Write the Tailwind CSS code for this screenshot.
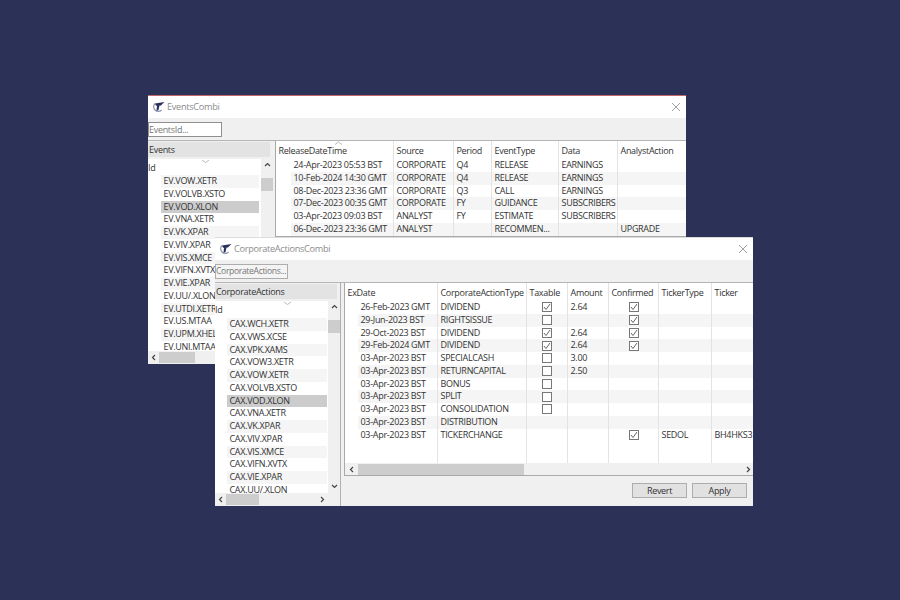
<!DOCTYPE html>
<html>
<head>
    <meta charset="UTF-8">
    <title>Combi windows</title>
    <script src="https://cdn.jsdelivr.net/npm/@tailwindcss/browser@4"></script>
</head>
<body class="bg-[#2b3157] w-[900px] h-[600px] overflow-hidden relative font-['Open_Sans',sans-serif] text-[9px] tracking-[-0.3px] text-[#333]">

    <!-- EventsCombi window -->
    <div class="absolute left-[148px] top-[95px] w-[538px] h-[269px] bg-[#f0f0f0] border-t border-[#c0686c] flex flex-col overflow-hidden">
        <div class="h-[22px] bg-white flex items-center pl-[4px] shrink-0">
            <svg width="13" height="12" viewBox="0 0 13 12"><path d="M3 2.5 A4.5 4.5 0 1 0 9.5 9" fill="none" stroke="#8e97ad" stroke-width="1.2"/><path d="M3 2.5 L12.5 1 Q10 3 9 4.5 L7.5 4.5 L6.5 9 L4.5 10 L5 5 Q3.5 4.5 3 2.5Z" fill="#27315c"/></svg>
            <span class="ml-[2px] text-[#8c8c8c] text-[9.2px]">EventsCombi</span>
            <svg class="ml-auto mr-[5px]" width="10" height="10" viewBox="0 0 10 10"><path d="M1 1 L9 9 M9 1 L1 9" stroke="#8a8a8a" stroke-width="0.8"/></svg>
        </div>
        <div class="h-[22px] shrink-0 flex items-center">
            <div class="w-[74px] h-[15px] bg-white border border-[#8f8f8f] text-[#777] leading-[13px] overflow-hidden">EventsId...</div>
        </div>
        <div class="flex flex-1 min-h-0 border-t border-[#b5b5b5]">
            <div id="eventsList" class="w-[125px] shrink-0 flex flex-col"></div>
            <div class="w-[2px] shrink-0"></div>
            <div id="eventsTable" class="flex-1 h-[96px] border-l border-b border-[#a9a9a9] bg-white relative overflow-hidden"></div>
        </div>
    </div>

    <!-- CorporateActionsCombi window -->
    <div class="absolute left-[215px] top-[237px] w-[538px] h-[269px] bg-[#f0f0f0] border-t border-[#dcdcdc] flex flex-col overflow-hidden">
        <div class="h-[22px] bg-white flex items-center pl-[4px] shrink-0">
            <svg width="13" height="12" viewBox="0 0 13 12"><path d="M3 2.5 A4.5 4.5 0 1 0 9.5 9" fill="none" stroke="#8e97ad" stroke-width="1.2"/><path d="M3 2.5 L12.5 1 Q10 3 9 4.5 L7.5 4.5 L6.5 9 L4.5 10 L5 5 Q3.5 4.5 3 2.5Z" fill="#27315c"/></svg>
            <span class="ml-[2px] text-[#8c8c8c] text-[9.2px]">CorporateActionsCombi</span>
            <svg class="ml-auto mr-[5px]" width="10" height="10" viewBox="0 0 10 10"><path d="M1 1 L9 9 M9 1 L1 9" stroke="#8a8a8a" stroke-width="0.8"/></svg>
        </div>
        <div class="h-[22px] shrink-0 flex items-center">
            <div class="w-[73px] h-[15px] bg-[#f4f4f4] border border-[#adadad] text-[#777] text-[8.6px] tracking-[-0.35px] leading-[13px] overflow-hidden whitespace-nowrap">CorporateActions...</div>
        </div>
        <div class="flex flex-1 min-h-0 border-t border-[#b5b5b5]">
            <div id="caList" class="w-[126px] shrink-0 flex flex-col border-r border-[#b0b0b0]"></div>
            <div class="flex-1 flex flex-col pl-[3px] min-w-0">
                <div id="caTable" class="h-[193px] border border-t-0 border-r-0 border-[#a9a9a9] bg-white flex flex-col overflow-hidden"></div>
                <div class="flex-1 flex items-center justify-end gap-[5px] pr-[6px] pb-[1px]">
                    <div class="w-[55px] h-[15px] bg-[#e1e1e1] border border-[#adadad] text-center leading-[13px]">Revert</div>
                    <div class="w-[55px] h-[15px] bg-[#e1e1e1] border border-[#adadad] text-center leading-[13px]">Apply</div>
                </div>
            </div>
        </div>
    </div>

    <script>
        const box = '<span class="w-[10px] h-[10px] border border-[#777] bg-white flex items-center justify-center"></span>';
        const tick = '<span class="w-[10px] h-[10px] border border-[#777] bg-white flex items-center justify-center"><svg width="8" height="8" viewBox="0 0 8 8"><path d="M1 4 L3 6.5 L7 1" fill="none" stroke="#555" stroke-width="0.9"/></svg></span>';
        const up = '<svg width="7" height="5" viewBox="0 0 7 5"><path d="M1 4 L3.5 1.5 L6 4" fill="none" stroke="#444" stroke-width="1.2"/></svg>';
        const down = '<svg width="7" height="5" viewBox="0 0 7 5"><path d="M1 1 L3.5 3.5 L6 1" fill="none" stroke="#444" stroke-width="1.2"/></svg>';
        const left = '<svg width="5" height="7" viewBox="0 0 5 7"><path d="M4 1 L1.5 3.5 L4 6" fill="none" stroke="#444" stroke-width="1.2"/></svg>';
        const right = '<svg width="5" height="7" viewBox="0 0 5 7"><path d="M1 1 L3.5 3.5 L1 6" fill="none" stroke="#444" stroke-width="1.2"/></svg>';
        const caret = '<svg class="absolute top-0" style="left:CARETpx" width="9" height="4" viewBox="0 0 9 4"><path d="M1 1 L4.5 3.5 L8 1" fill="none" stroke="#a8a8a8" stroke-width="0.8"/></svg>';

        function listPane(title, names, selected, rowLeft, rowWidth, thumbW, caretX, gap) {
            const rows = names.map((n, i) => {
                const bg = n === selected ? 'bg-[#cccccc]' : (i % 2 ? 'bg-white' : 'bg-[#f5f5f5]');
                return `<div class="h-[12.75px] leading-[12.75px] pl-[2.5px] whitespace-nowrap overflow-hidden ${bg}">${n}</div>`;
            }).join('');
            return `
                <div class="h-[15px] mr-[3px] mt-[1px] bg-[#e3e3e3] leading-[15px] pl-[1px] shrink-0 font-medium text-[#333]">${title}</div>
                <div class="h-[2px] shrink-0"></div>
                <div class="flex-1 min-h-0 flex bg-white relative">
                    ${caret.replace('CARET', caretX)}
                    <div class="flex-1 min-w-0 overflow-hidden">
                        <div class="h-[16px] leading-[18px] shrink-0">Id</div>
                        <div style="margin-top:${gap}px;margin-left:${rowLeft}px;width:${rowWidth}px" class="overflow-hidden">${rows}</div>
                    </div>
                    <div class="w-[12px] shrink-0 bg-[#f0f0f0] flex flex-col items-center">
                        <div class="h-[19px] pt-[3px]">${up}</div>
                        <div class="h-[13px] w-full bg-[#cdcdcd]"></div>
                        <div class="mt-auto h-[13px] flex items-center">${down}</div>
                    </div>
                </div>
                <div class="h-[13px] shrink-0 bg-[#f0f0f0] flex items-center pl-[3px]">
                    ${left}
                    <div class="ml-[3px] h-[11px] bg-[#cdcdcd]" style="width:${thumbW}px"></div>
                    <div class="ml-auto mr-[15px]">${right}</div>
                </div>`;
        }

        function gridRows(cols, rows, indent) {
            return rows.map((r, i) => {
                const cells = r.map((c, j) => `<div style="width:${j ? cols[j] : cols[j] - indent}px" class="shrink-0 h-full pl-[2.5px] leading-[12.75px] whitespace-nowrap overflow-hidden">${c}</div>`).join('');
                return `<div style="margin-left:${indent}px" class="h-[12.75px] flex ${i % 2 ? 'bg-[#f5f5f5]' : 'bg-white'}">${cells}</div>`;
            }).join('');
        }

        function header(cols, names) {
            return `<div class="h-[18px] shrink-0 flex text-[#333]">${names.map((n, i) => `<div style="width:${cols[i]}px" class="shrink-0 pl-[2.5px] leading-[19px] whitespace-nowrap overflow-hidden">${n}</div>`).join('')}</div>`;
        }

        function lines(cols, height) {
            let x = 0;
            return cols.slice(0, -1).map(w => { x += w; return `<div class="absolute top-0 w-px bg-[#e3e3e3]" style="left:${x - 1}px;height:${height}px"></div>`; }).join('');
        }

        document.getElementById('eventsList').innerHTML = listPane('Events',
            ['EV.VOW.XETR','EV.VOLVB.XSTO','EV.VOD.XLON','EV.VNA.XETR','EV.VK.XPAR','EV.VIV.XPAR','EV.VIS.XMCE','EV.VIFN.XVTX','EV.VIE.XPAR','EV.UU/.XLON','EV.UTDI.XETR','EV.US.MTAA','EV.UPM.XHEL','EV.UNI.MTAA'],
            'EV.VOD.XLON', 13, 98, 36, 53, 0);

        document.getElementById('caList').innerHTML = listPane('CorporateActions',
            ['CAX.WCH.XETR','CAX.VWS.XCSE','CAX.VPK.XAMS','CAX.VOW3.XETR','CAX.VOW.XETR','CAX.VOLVB.XSTO','CAX.VOD.XLON','CAX.VNA.XETR','CAX.VK.XPAR','CAX.VIV.XPAR','CAX.VIS.XMCE','CAX.VIFN.XVTX','CAX.VIE.XPAR','CAX.UU/.XLON'],
            'CAX.VOD.XLON', 12, 100, 33, 68, 1);

        const evCols = [118, 60, 38, 67, 59, 68];
        const evRows = [
            ['24-Apr-2023 05:53 BST','CORPORATE','Q4','RELEASE','EARNINGS',''],
            ['10-Feb-2024 14:30 GMT','CORPORATE','Q4','RELEASE','EARNINGS',''],
            ['08-Dec-2023 23:36 GMT','CORPORATE','Q3','CALL','EARNINGS',''],
            ['07-Dec-2023 00:35 GMT','CORPORATE','FY','GUIDANCE','SUBSCRIBERS',''],
            ['03-Apr-2023 09:03 BST','ANALYST','FY','ESTIMATE','SUBSCRIBERS',''],
            ['06-Dec-2023 23:36 GMT','ANALYST','','RECOMMEN...','','UPGRADE']
        ];
        document.getElementById('eventsTable').innerHTML =
            header(evCols, ['ReleaseDateTime','Source','Period','EventType','Data','AnalystAction']) +
            gridRows(evCols, evRows, 15) + lines(evCols, 96) +
            '<svg class="absolute left-[58px] top-0" width="9" height="4" viewBox="0 0 9 4"><path d="M1 3.5 L4.5 1 L8 3.5" fill="none" stroke="#a8a8a8" stroke-width="0.8"/></svg>';

        const caCols = [93, 89, 41, 41, 50, 53, 41];
        const cb = c => `<div class="h-full flex items-center justify-center -ml-[3px]">${c}</div>`;
        const caRows = [
            ['26-Feb-2023 GMT','DIVIDEND',cb(tick),'2.64',cb(tick),'',''],
            ['29-Jun-2023 BST','RIGHTSISSUE',cb(box),'',cb(tick),'',''],
            ['29-Oct-2023 BST','DIVIDEND',cb(tick),'2.64',cb(tick),'',''],
            ['29-Feb-2024 GMT','DIVIDEND',cb(tick),'2.64',cb(tick),'',''],
            ['03-Apr-2023 BST','SPECIALCASH',cb(box),'3.00','','',''],
            ['03-Apr-2023 BST','RETURNCAPITAL',cb(box),'2.50','','',''],
            ['03-Apr-2023 BST','BONUS',cb(box),'','','',''],
            ['03-Apr-2023 BST','SPLIT',cb(box),'','','',''],
            ['03-Apr-2023 BST','CONSOLIDATION',cb(box),'','','',''],
            ['03-Apr-2023 BST','DISTRIBUTION','','','','',''],
            ['03-Apr-2023 BST','TICKERCHANGE','','',cb(tick),'SEDOL','BH4HKS3']
        ];
        document.getElementById('caTable').innerHTML =
            `<div class="relative flex-1 min-h-0 overflow-hidden">` +
            header(caCols, ['ExDate','CorporateActionType','Taxable','Amount','Confirmed','TickerType','Ticker']) +
            gridRows(caCols, caRows, 13) + lines(caCols, 180) + `</div>` +
            `<div class="h-[12px] shrink-0 bg-[#f0f0f0] flex items-center pl-[4px]">${left}<div class="ml-[4px] h-[11px] w-[166px] bg-[#cdcdcd]"></div><div class="ml-auto mr-[2px]">${right}</div></div>`;
    </script>
</body>
</html>
